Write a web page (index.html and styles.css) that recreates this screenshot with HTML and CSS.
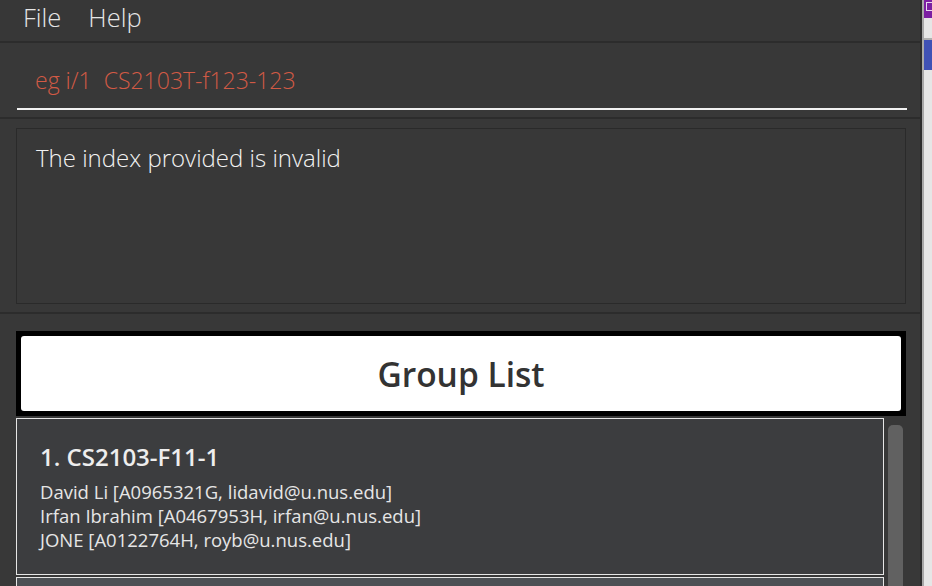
FILE: index.html
```html
<!DOCTYPE html>
<html>
<head>
<meta charset="utf-8">
<link rel="stylesheet" href="styles.css">
</head>
<body>
<div class="screen">
  <div class="app">
    <div class="menubar">
      <span class="menu-item">File</span>
      <span class="menu-item">Help</span>
    </div>
    <div class="command-panel">
      <div class="command-box">eg i/1&nbsp; CS2103T-f123-123</div>
    </div>
    <div class="result-panel">
      <div class="result-box">The index provided is invalid</div>
    </div>
    <div class="list-panel">
      <div class="list-header">
        <div class="list-title">Group List</div>
      </div>
      <div class="list-body">
        <div class="cards">
          <div class="card">
            <div class="card-title">1. CS2103-F11-1</div>
            <div class="card-line">David Li [A0965321G, lidavid@u.nus.edu]</div>
            <div class="card-line">Irfan Ibrahim [A0467953H, irfan@u.nus.edu]</div>
            <div class="card-line">JONE [A0122764H, royb@u.nus.edu]</div>
          </div>
          <div class="card card-alt"></div>
        </div>
        <div class="scroll-track"><div class="scroll-thumb"></div></div>
      </div>
    </div>
  </div>
  <div class="side">
    <div class="side-purple"><span class="side-mark"></span></div>
    <div class="side-light"></div>
    <div class="side-blue"></div>
    <div class="side-rest"></div>
  </div>
</div>
</body>
</html>
```
FILE: styles.css
```css
html, body {
  margin: 0;
  padding: 0;
}
body {
  width: 932px;
  height: 586px;
  overflow: hidden;
  background: #383838;
  font-family: "Open Sans", "Noto Sans", sans-serif;
}
.screen {
  display: flex;
  width: 932px;
  height: 586px;
  overflow: hidden;
}
.app {
  width: 920px;
  border-right: 2px solid #2e2e2e;
  display: flex;
  flex-direction: column;
  background: #383838;
  overflow: hidden;
}
.menubar {
  display: flex;
  align-items: flex-start;
  gap: 27px;
  padding-left: 23px;
  background: #373737;
  border-bottom: 2px solid #2c2c2c;
  box-sizing: border-box;
  height: 43px;
  flex-shrink: 0;
}
.menu-item {
  color: #e6e6e6;
  font-size: 25.5px;
  font-weight: 300;
  line-height: 35px;
}
.command-panel {
  height: 74px;
  padding: 0 13px 0 17px;
  display: flex;
  align-items: flex-end;
  background: #383838;
  border-bottom: 2px solid #2c2c2c;
  flex-shrink: 0;
}
.command-box {
  flex: 1;
  color: #d25a45;
  font-size: 23px;
  font-weight: 300;
  padding-left: 18px;
  padding-bottom: 14px;
  line-height: 28px;
  border-bottom: 2px solid #f2f2f2;
  margin-bottom: 7px;
}
.result-panel {
  padding: 9px 14px 8px 16px;
  border-bottom: 2px solid #2c2c2c;
  flex-shrink: 0;
}
.result-box {
  height: 176px;
  border: 1px solid #2a2a2a;
  background: #383838;
  color: #f2f2f2;
  font-size: 24px;
  font-weight: 300;
  padding: 14px 19px;
  box-sizing: border-box;
  line-height: 30px;
}
.list-panel {
  flex: 1;
  padding: 17px 14px 0 16px;
  display: flex;
  flex-direction: column;
  min-height: 0;
}
.list-header {
  background: #000;
  padding: 5px;
  height: 85px;
  box-sizing: border-box;
  flex-shrink: 0;
}
.list-title {
  height: 100%;
  background: #fff;
  border-radius: 3px;
  display: flex;
  align-items: center;
  justify-content: center;
  font-size: 33.5px;
  font-weight: 600;
  color: #333;
}
.list-body {
  flex: 1;
  display: flex;
  gap: 4px;
  margin-top: 2px;
  min-height: 0;
}
.cards {
  width: 868px;
  display: flex;
  flex-direction: column;
}
.card {
  height: 157px;
  background: #3c3d3f;
  border: 1px solid #e6e6e6;
  box-sizing: border-box;
  padding: 23px 23px;
  flex-shrink: 0;
}
.card-alt {
  background: #4c5054;
  margin-top: 2px;
}
.card-title {
  color: #eeeeee;
  font-size: 24px;
  font-weight: 600;
  line-height: 30px;
  margin-bottom: 8px;
}
.card-line {
  color: #e6e6e6;
  font-size: 18.5px;
  line-height: 24px;
}
.scroll-track {
  width: 18px;
  padding: 7px 0 0 0;
}
.scroll-thumb {
  width: 15px;
  height: 200px;
  background: #616161;
  border-radius: 5px;
}
.side {
  width: 10px;
  display: flex;
  flex-direction: column;
  border-left: 2px solid #a8a8a8;
  box-sizing: border-box;
  background: #e6e6e6;
}
.side-purple {
  height: 18px;
  background: #7b1fa2;
  position: relative;
}
.side-mark {
  position: absolute;
  left: 2px;
  top: 2px;
  width: 6px;
  height: 7px;
  border: 1px solid #e8d8f0;
  border-right: none;
}
.side-light {
  height: 20px;
  background: #e6e6e6;
  border-bottom: 2px solid #b0b0b0;
}
.side-blue {
  height: 30px;
  background: #3f51b5;
}
.side-rest {
  flex: 1;
  background: #e6e6e6;
}
```
